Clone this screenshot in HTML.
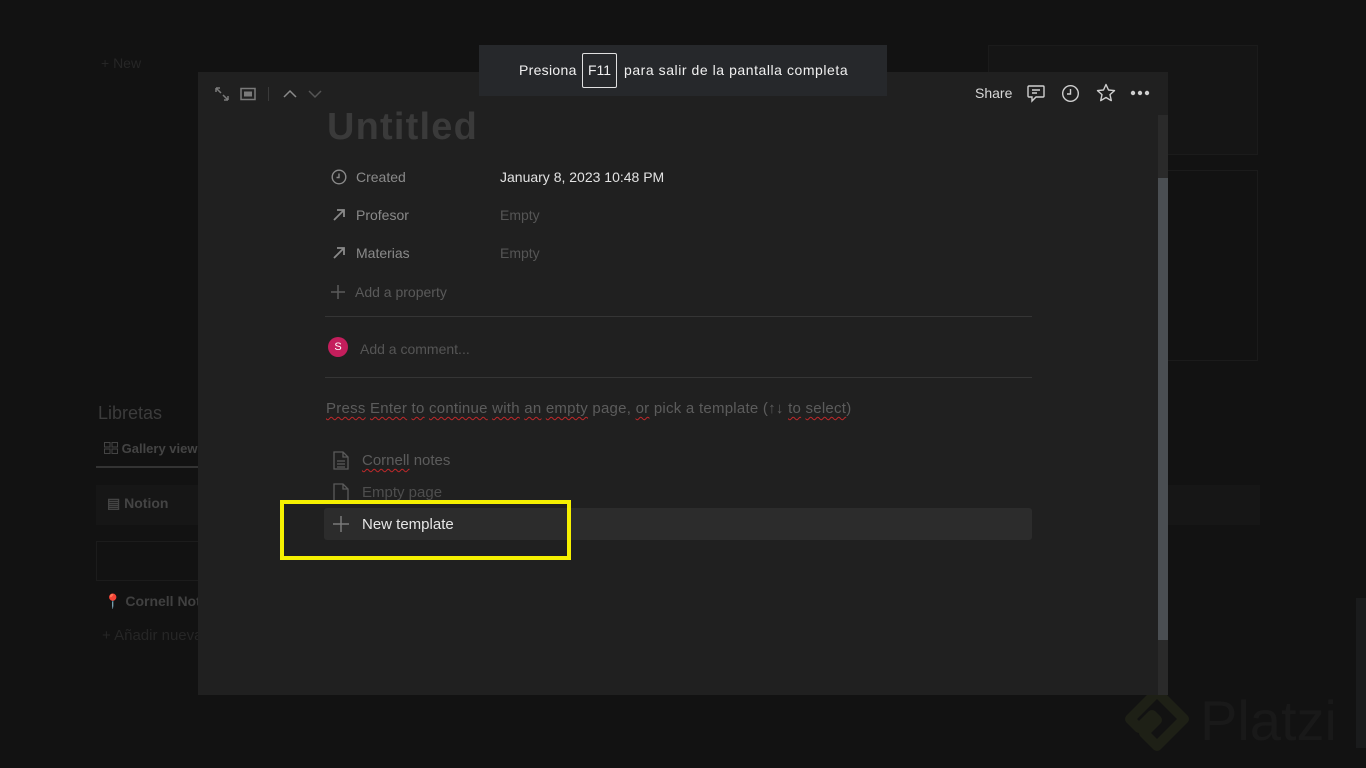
<!DOCTYPE html>
<html><head><meta charset="utf-8">
<style>
*{box-sizing:border-box;margin:0;padding:0}
html,body{width:1366px;height:768px;overflow:hidden;background:#121212;font-family:"Liberation Sans",sans-serif;position:relative}
.a{position:absolute}
.t{white-space:nowrap}
.sq{text-decoration:underline wavy #c0282a;text-decoration-thickness:1px;text-underline-offset:3px}
</style></head><body>
<!-- background page -->
<div class="a t" style="left:101px;top:55px;color:#262626;font-size:14px">+ New</div>
<div class="a" style="left:988px;top:45px;width:270px;height:110px;border:1px solid #1b1b1b;background:#151515"></div>
<div class="a" style="left:988px;top:170px;width:270px;height:191px;border:1px solid #1b1b1b;background:#121212"></div>
<div class="a t" style="left:98px;top:403px;color:#3c3c3c;font-size:18px">Libretas</div>
<div class="a t" style="left:104px;top:441px;color:#444;font-size:13px;font-weight:bold">
<svg width="14" height="12" viewBox="0 0 14 12" style="vertical-align:-1px"><g fill="none" stroke="#444"><rect x="0.5" y="0.5" width="5.5" height="4.5"/><rect x="8" y="0.5" width="5.5" height="4.5"/><rect x="0.5" y="7" width="5.5" height="4.5"/><rect x="8" y="7" width="5.5" height="4.5"/></g></svg> Gallery view</div>
<div class="a" style="left:96px;top:466px;width:110px;height:2px;background:#333"></div>
<div class="a" style="left:96px;top:485px;width:1164px;height:40px;background:#161616"></div>
<div class="a t" style="left:107px;top:495px;color:#444;font-size:14px;font-weight:bold">▤ Notion</div>
<div class="a" style="left:96px;top:541px;width:110px;height:40px;border:1px solid #1c1c1c"></div>
<div class="a t" style="left:104px;top:593px;color:#404040;font-size:14px;font-weight:bold"><span style="color:#5a2424">📍</span> Cornell Notes</div>
<div class="a t" style="left:102px;top:627px;color:#262626;font-size:15px">+ Añadir nueva</div>
<div class="a" style="left:1356px;top:598px;width:10px;height:150px;background:#1a1b1c"></div>
<!-- platzi watermark -->
<svg class="a" style="left:1122px;top:684px" width="70" height="78" viewBox="0 0 70 78"><path d="M35 8 L62 35 L35 62 L22 49 L35 36 L30 31 L17 44 L8 35 Z" fill="none" stroke="#1e2016" stroke-width="10" stroke-linejoin="round"/></svg>
<div class="a t" style="left:1200px;top:688px;color:#191919;font-size:56px">Platzi</div>

<!-- modal -->
<div class="a" style="left:198px;top:72px;width:970px;height:623px;background:#202020"></div>
<div class="a" style="left:1158px;top:115px;width:10px;height:580px;background:#2a2a2a"></div>
<div class="a" style="left:1158px;top:178px;width:10px;height:462px;background:#4a4e52"></div>
<!-- top left icons -->
<svg class="a" style="left:213px;top:85px" width="18" height="18" viewBox="0 0 18 18" fill="none" stroke="#7a7a7a" stroke-width="1.5"><path d="M3 3l5 5M3 3v4M3 3h4M15 15l-5-5M15 15v-4M15 15h-4"/></svg>
<svg class="a" style="left:240px;top:87px" width="16" height="14" viewBox="0 0 16 14"><rect x="1" y="1.5" width="14" height="11" fill="none" stroke="#7a7a7a" stroke-width="1.5"/><rect x="4" y="4.5" width="8" height="5" fill="#7a7a7a"/></svg>
<div class="a" style="left:268px;top:87px;width:1px;height:14px;background:#3a3a3a"></div>
<svg class="a" style="left:282px;top:88px" width="16" height="12" viewBox="0 0 16 12" fill="none" stroke="#8a8a8a" stroke-width="1.5"><path d="M2 9l6-6 6 6"/></svg>
<svg class="a" style="left:307px;top:88px" width="16" height="12" viewBox="0 0 16 12" fill="none" stroke="#555" stroke-width="1.5"><path d="M2 3l6 6 6-6"/></svg>
<!-- top right -->
<div class="a t" style="left:975px;top:85px;color:#d8d8d8;font-size:14px">Share</div>
<svg class="a" style="left:1026px;top:84px" width="20" height="19" viewBox="0 0 20 19" fill="none" stroke="#cfcfcf" stroke-width="1.4"><path d="M3 2h14a1 1 0 0 1 1 1v9a1 1 0 0 1-1 1H10l-4 4v-4H3a1 1 0 0 1-1-1V3a1 1 0 0 1 1-1z"/><path d="M6 6h8M6 9h5"/></svg>
<svg class="a" style="left:1061px;top:84px" width="19" height="19" viewBox="0 0 19 19" fill="none" stroke="#cfcfcf" stroke-width="1.4"><circle cx="9.5" cy="9.5" r="7.8"/><path d="M9.5 5v5H6"/></svg>
<svg class="a" style="left:1096px;top:83px" width="20" height="19" viewBox="0 0 20 19" fill="none" stroke="#cfcfcf" stroke-width="1.4"><path d="M10 1.5l2.5 5.5 6 .6-4.5 4 1.3 6L10 14.5l-5.3 3.1 1.3-6-4.5-4 6-.6z" stroke-linejoin="round"/></svg>
<svg class="a" style="left:1130px;top:90px" width="20" height="6" viewBox="0 0 20 6" fill="#cfcfcf"><circle cx="3" cy="3" r="2.2"/><circle cx="10" cy="3" r="2.2"/><circle cx="17" cy="3" r="2.2"/></svg>

<div class="a t" style="left:327px;top:106px;color:#3a3a3a;font-size:38px;font-weight:bold;letter-spacing:1.2px">Untitled</div>
<!-- properties -->
<svg class="a" style="left:331px;top:169px" width="16" height="16" viewBox="0 0 16 16" fill="none" stroke="#8a8a8a" stroke-width="1.4"><circle cx="8" cy="8" r="6.8"/><path d="M8 4.5v4H5.5"/></svg>
<div class="a t" style="left:356px;top:169px;color:#8a8a8a;font-size:14px">Created</div>
<div class="a t" style="left:500px;top:169px;color:#e2e2e2;font-size:14px">January 8, 2023 10:48 PM</div>
<svg class="a" style="left:332px;top:208px" width="14" height="14" viewBox="0 0 14 14" fill="none" stroke="#8a8a8a" stroke-width="1.8"><path d="M2 12L12 2M5 2h7v7"/></svg>
<div class="a t" style="left:356px;top:207px;color:#8a8a8a;font-size:14px">Profesor</div>
<div class="a t" style="left:500px;top:207px;color:#555;font-size:14px">Empty</div>
<svg class="a" style="left:332px;top:246px" width="14" height="14" viewBox="0 0 14 14" fill="none" stroke="#8a8a8a" stroke-width="1.8"><path d="M2 12L12 2M5 2h7v7"/></svg>
<div class="a t" style="left:356px;top:245px;color:#8a8a8a;font-size:14px">Materias</div>
<div class="a t" style="left:500px;top:245px;color:#555;font-size:14px">Empty</div>
<svg class="a" style="left:331px;top:285px" width="14" height="14" viewBox="0 0 14 14" stroke="#5a5a5a" stroke-width="1.5"><path d="M7 0v14M0 7h14"/></svg>
<div class="a t" style="left:355px;top:284px;color:#5a5a5a;font-size:14px">Add a property</div>
<div class="a" style="left:325px;top:316px;width:707px;height:1px;background:#353535"></div>
<div class="a" style="left:328px;top:337px;width:20px;height:20px;border-radius:50%;background:#c41e5c;color:#fff;font-size:11px;text-align:center;line-height:20px">S</div>
<div class="a t" style="left:360px;top:341px;color:#555;font-size:14px">Add a comment...</div>
<div class="a" style="left:325px;top:377px;width:707px;height:1px;background:#353535"></div>
<div class="a t" style="left:326px;top:400px;color:#5c5c5c;font-size:15px;letter-spacing:0.25px"><span class="sq">Press</span> <span class="sq">Enter</span> <span class="sq">to</span> <span class="sq">continue</span> <span class="sq">with</span> <span class="sq">an</span> <span class="sq">empty</span> page, <span class="sq">or</span> pick a template (↑↓ <span class="sq">to</span> <span class="sq">select</span>)</div>
<svg class="a" style="left:333px;top:451px" width="16" height="19" viewBox="0 0 16 19" fill="none" stroke="#5a5a5a" stroke-width="1.3"><path d="M1 1h9l5 5v12H1z M10 1v5h5 M4 10h8M4 13h8M4 16h8"/></svg>
<div class="a t" style="left:362px;top:452px;color:#5c5c5c;font-size:15px"><span class="sq">Cornell</span> notes</div>
<svg class="a" style="left:333px;top:483px" width="16" height="19" viewBox="0 0 16 19" fill="none" stroke="#5a5a5a" stroke-width="1.3"><path d="M1 1h9l5 5v12H1z M10 1v5h5"/></svg>
<div class="a t" style="left:362px;top:484px;color:#4e4e4e;font-size:15px">Empty page</div>
<div class="a" style="left:324px;top:508px;width:708px;height:32px;background:#2c2c2c;border-radius:3px"></div>
<svg class="a" style="left:333px;top:516px" width="16" height="16" viewBox="0 0 16 16" stroke="#7a7a7a" stroke-width="1.5"><path d="M8 0v16M0 8h16"/></svg>
<div class="a t" style="left:362px;top:516px;color:#e6e6e6;font-size:15px">New template</div>
<!-- yellow highlight -->
<div class="a" style="left:280px;top:500px;width:291px;height:60px;border:4px solid #f5f000"></div>
<!-- toast -->
<div class="a" style="left:479px;top:45px;width:408px;height:51px;background:#26282b"></div>
<div class="a t" style="left:519px;top:62px;color:#f0f0f0;font-size:14px;letter-spacing:0.3px">Presiona</div>
<div class="a t" style="left:582px;top:53px;width:35px;height:35px;border:1px solid #e0e0e0;border-radius:2px;color:#f0f0f0;font-size:14px;text-align:center;line-height:33px">F11</div>
<div class="a t" style="left:624px;top:62px;color:#f0f0f0;font-size:14px;letter-spacing:0.55px">para salir de la pantalla completa</div>
</body></html>
